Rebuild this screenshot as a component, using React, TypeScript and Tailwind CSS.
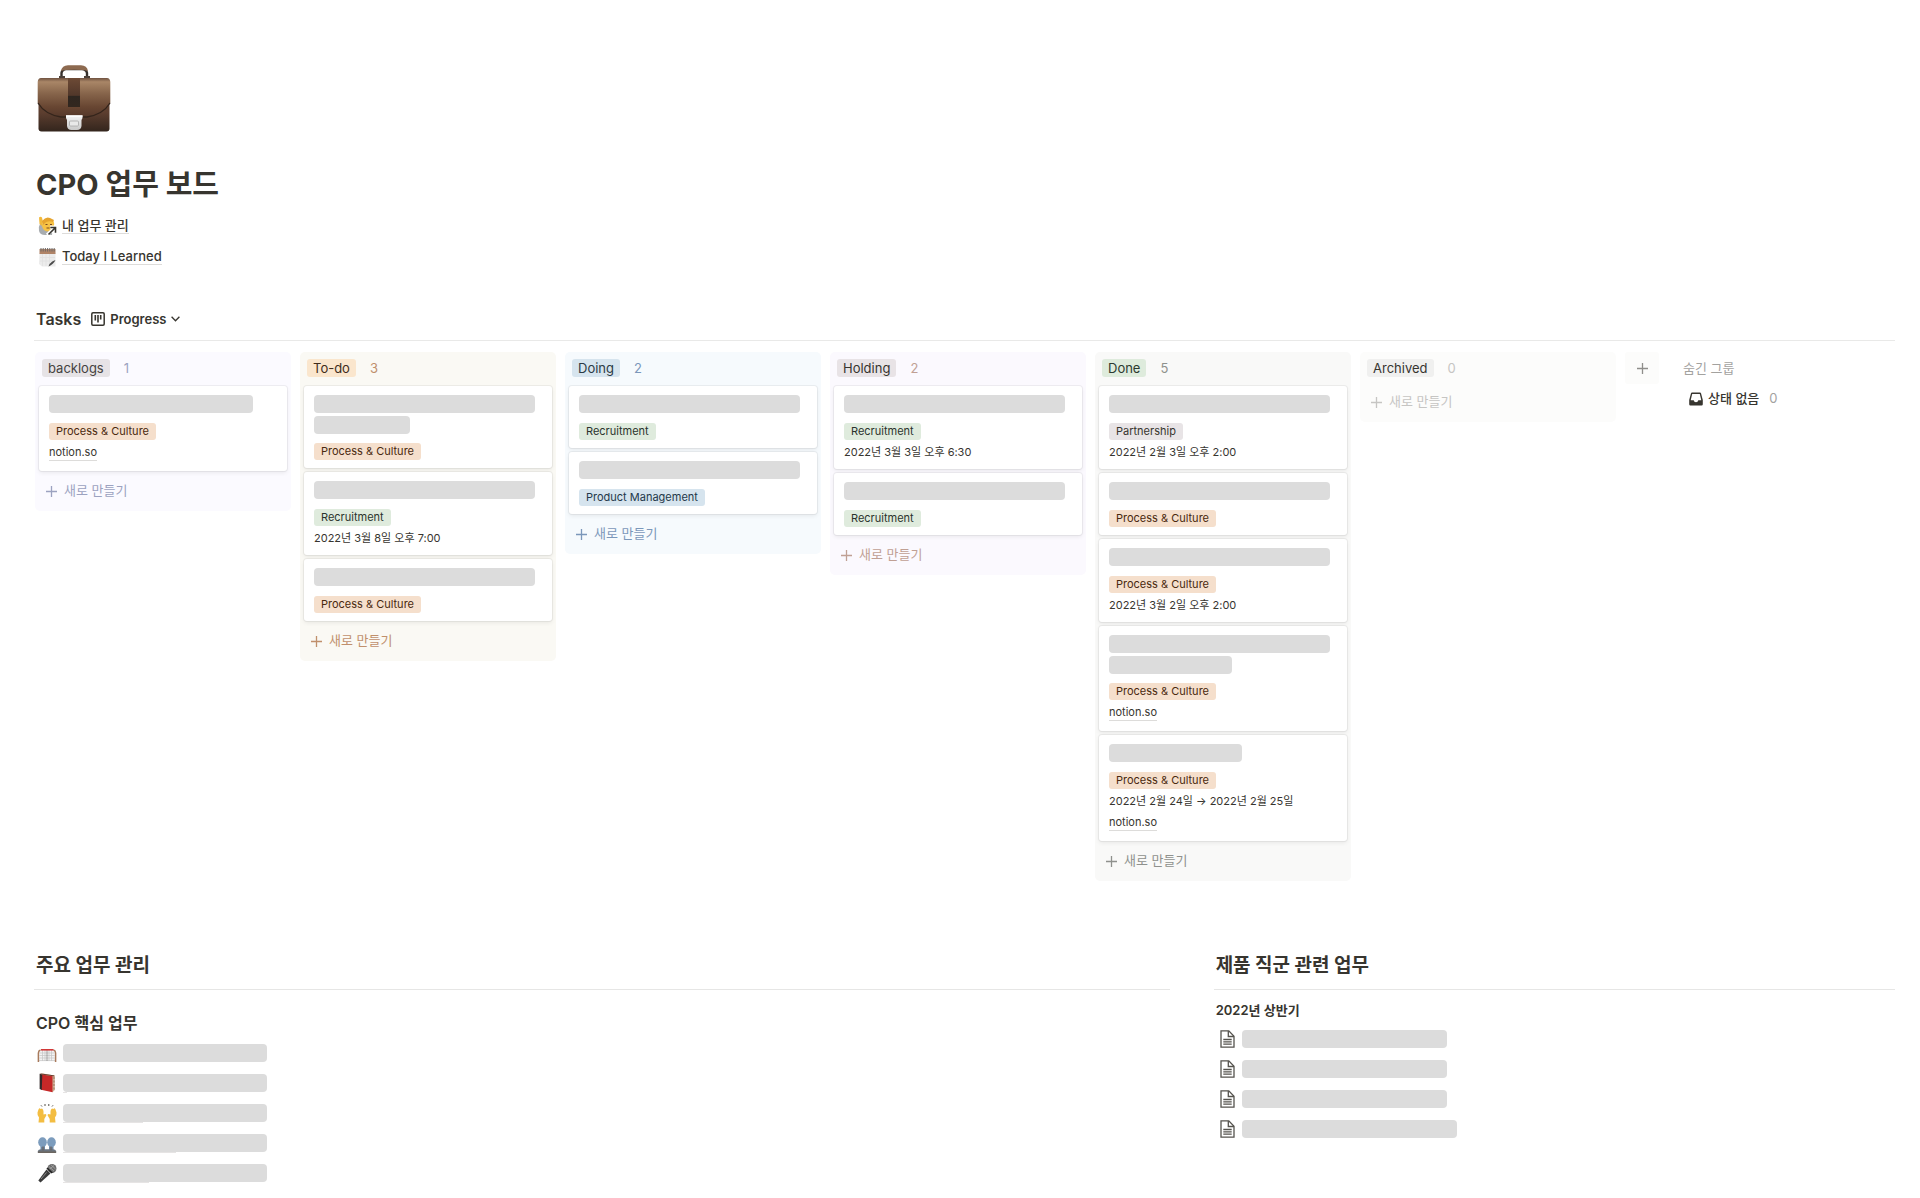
import React from "react";

type Tone = "orange" | "green" | "blue" | "gray";

type CardData = {
  bars: string[];
  tag: string;
  tone: Tone;
  date?: string;
  link?: string;
};

type ColumnData = {
  name: string;
  count: number;
  bg: string;
  pill: string;
  accent: string;
  cards: CardData[];
};

const TONES: Record<Tone, string> = {
  orange: "bg-[#f5dfcc] text-[#49290e]",
  green: "bg-[#dfebdd] text-[#2b332d]",
  blue: "bg-[#d6e4ee] text-[#24384a]",
  gray: "bg-[#e8e4e6] text-[#37352f]",
};

const PC = "Process & Culture";

const COLUMNS: ColumnData[] = [
  {
    name: "backlogs",
    count: 1,
    bg: "bg-[#fbfaff]",
    pill: "bg-[#e6e3e6] text-[#45423f]",
    accent: "text-[#9ca2c0]",
    cards: [{ bars: ["w-[204px]"], tag: PC, tone: "orange", link: "notion.so" }],
  },
  {
    name: "To-do",
    count: 3,
    bg: "bg-[#faf9f4]",
    pill: "bg-[#fae6cd] text-[#402c1b]",
    accent: "text-[#c0906c]",
    cards: [
      { bars: ["w-[221px]", "w-[96px]"], tag: PC, tone: "orange" },
      { bars: ["w-[221px]"], tag: "Recruitment", tone: "green", date: "2022년 3월 8일 오후 7:00" },
      { bars: ["w-[221px]"], tag: PC, tone: "orange" },
    ],
  },
  {
    name: "Doing",
    count: 2,
    bg: "bg-[#f6fafd]",
    pill: "bg-[#d6e4ee] text-[#2b3a45]",
    accent: "text-[#7b97ba]",
    cards: [
      { bars: ["w-[221px]"], tag: "Recruitment", tone: "green" },
      { bars: ["w-[221px]"], tag: "Product Management", tone: "blue" },
    ],
  },
  {
    name: "Holding",
    count: 2,
    bg: "bg-[#fbf9fe]",
    pill: "bg-[#e8e3e6] text-[#37352f]",
    accent: "text-[#c0a094]",
    cards: [
      { bars: ["w-[221px]"], tag: "Recruitment", tone: "green", date: "2022년 3월 3일 오후 6:30" },
      { bars: ["w-[221px]"], tag: "Recruitment", tone: "green" },
    ],
  },
  {
    name: "Done",
    count: 5,
    bg: "bg-[#f9f9f8]",
    pill: "bg-[#deebdc] text-[#2c3a30]",
    accent: "text-[#8f918d]",
    cards: [
      { bars: ["w-[221px]"], tag: "Partnership", tone: "gray", date: "2022년 2월 3일 오후 2:00" },
      { bars: ["w-[221px]"], tag: PC, tone: "orange" },
      { bars: ["w-[221px]"], tag: PC, tone: "orange", date: "2022년 3월 2일 오후 2:00" },
      { bars: ["w-[221px]", "w-[123px]"], tag: PC, tone: "orange", link: "notion.so" },
      {
        bars: ["w-[133px]"],
        tag: PC,
        tone: "orange",
        date: "2022년 2월 24일 → 2022년 2월 25일",
        link: "notion.so",
      },
    ],
  },
  {
    name: "Archived",
    count: 0,
    bg: "bg-[#fcfcfb]",
    pill: "bg-[#f0f0ef] text-[#37352f]",
    accent: "text-[#c6c5c3]",
    cards: [],
  },
];

function Plus() {
  return (
    <svg className="size-[11px] shrink-0" viewBox="0 0 11 11" fill="none" stroke="currentColor" strokeWidth="1.3">
      <path d="M5.5 0v11M0 5.5h11" />
    </svg>
  );
}

function Briefcase() {
  return (
    <svg className="ml-[3px] h-[67px] w-[74px]" viewBox="0 0 74 67" role="img" aria-label="briefcase">
      <defs>
        <linearGradient id="bc-body" x1="0" y1="0" x2="0" y2="1">
          <stop offset="0" stopColor="#6b4a35" />
          <stop offset="0.6" stopColor="#5c3e2f" />
          <stop offset="1" stopColor="#33251d" />
        </linearGradient>
        <linearGradient id="bc-flap" x1="0" y1="0" x2="0" y2="1">
          <stop offset="0" stopColor="#6f5240" />
          <stop offset="0.1" stopColor="#a98667" />
          <stop offset="0.4" stopColor="#87654b" />
          <stop offset="0.75" stopColor="#684632" />
          <stop offset="1" stopColor="#55382a" />
        </linearGradient>
        <linearGradient id="bc-strap" x1="0" y1="0" x2="0" y2="1">
          <stop offset="0" stopColor="#6d4a35" />
          <stop offset="0.6" stopColor="#51372a" />
          <stop offset="0.62" stopColor="#2e2620" />
          <stop offset="1" stopColor="#33271f" />
        </linearGradient>
        <linearGradient id="bc-lock" x1="0" y1="0" x2="0" y2="1">
          <stop offset="0" stopColor="#f4f4f4" />
          <stop offset="1" stopColor="#c9c9c9" />
        </linearGradient>
      </defs>
      <path d="M24.5 13V8Q25 4.500 29 4H45Q49.500 4.500 50 8V13" fill="none" stroke="#35302c" strokeWidth="2.400" />
      <path d="M24 6Q25 .5 31 .3H44Q50 .5 51 6Q47 4.800 37 4.800T24 6Z" fill="#8d6a50" />
      <path d="M22 11h6v3h-6zM47 11h6v3h-6z" fill="#4b4039" />
      <rect x="1.500" y="20" width="71" height="46.500" rx="3" fill="url(#bc-body)" />
      <path d="M4 13H70Q73 13 73.300 17V38Q66 49 50 51.500H24Q8 49 .7 38V17Q1 13 4 13Z" fill="url(#bc-flap)" />
      <path d="M1 38Q8 49.500 24 52H50Q66 49.500 73 38" fill="none" stroke="#33241b" strokeWidth="1.300" />
      <rect x="31" y="13" width="12" height="29" fill="url(#bc-strap)" />
      <path d="M29 50.500H45.500V53L44.500 55V61Q44 65 40 65H34.500Q30.500 65 30 61V55L29 53Z" fill="url(#bc-lock)" />
      <rect x="32.500" y="56" width="9" height="5" rx="1" fill="#e9e9e9" stroke="#a8a8a8" strokeWidth=".8" />
      <path d="M29 51H45.500" stroke="#fff" strokeWidth="1.500" />
    </svg>
  );
}

function RaisedHandIcon() {
  return (
    <svg className="h-5 w-[19px] shrink-0" viewBox="0 0 19 20">
      <path d="M2 8Q0 11 1 15Q2 19 7 19H14Q15 15 11 13L5 8Z" fill="#a9adb0" />
      <path d="M1 1.500Q2.500 0 4 1.500L5 6L4 10L1.500 8Z" fill="#f2b93c" />
      <path d="M5 5Q8 1.500 13 3Q17 5 16 10Q15 15 10 15.500Q5 15 4 10Z" fill="#f7c244" />
      <path d="M4 5Q8 0 12 2L16 4L15 6Q10 4 7 7L5 9Z" fill="#e6a42e" />
      <path d="M7.500 8.500h2M12 8.500h2M8.500 12h3" stroke="#7a4a20" strokeWidth="1" />
      <path d="M9 19L16.500 12M12 11.200H17.700V17" fill="none" stroke="#fff" strokeWidth="3.200" />
      <path d="M10.500 18.500L17 12M12.300 11.500H17.500V16.700" fill="none" stroke="#37352f" strokeWidth="1.600" />
    </svg>
  );
}

function NotepadIcon() {
  return (
    <svg className="h-5 w-[19px] shrink-0" viewBox="0 0 19 20">
      <path d="M1.500 6H17.500V19.500H4L1 17Z" fill="#ececec" />
      <path d="M4.500 7v12M8 7v12M11.500 7v12M2 10.500h15M2 14h15" stroke="#e0e0e0" strokeWidth=".7" />
      <rect x="1.500" y="2" width="16" height="5" fill="#b08468" />
      <path d="M3 1v3.500M5.200 1v3.500M7.400 1v3.500M9.600 1v3.500M11.800 1v3.500M14 1v3.500M16.200 1v3.500" stroke="#6e6a68" strokeWidth="1" />
      <path d="M17.500 13Q15.500 17 10.500 19.500L11.500 17Q14 14 17.500 13Z" fill="#4b4b4b" />
    </svg>
  );
}

function GoalIcon() {
  return (
    <svg className="h-5 w-5 shrink-0" viewBox="0 0 20 20">
      <path d="M3 7H17L18 18H2Z" fill="#f3f3f3" />
      <path d="M5.500 7v11M8 7v11M12 7v11M14.500 7v11M2.500 10h15M2.500 12.500h15M2.500 15h15M2 17.600h16" stroke="#c4c4c4" strokeWidth=".7" />
      <path d="M10 7v11" stroke="#8a8a8a" strokeWidth=".8" />
      <path d="M1.400 19V10Q1.500 7.500 3.500 7M18.600 19V10Q18.500 7.500 16.500 7" fill="none" stroke="#a87a5c" strokeWidth="1.500" />
      <path d="M4 6.800H16.500" stroke="#cf2e2e" strokeWidth="1.500" />
    </svg>
  );
}

function BookIcon() {
  return (
    <svg className="h-5 w-5 shrink-0" viewBox="0 0 20 20">
      <path d="M3 1L6 .5L17.800 2.500V17L15.500 19.300Z" fill="#cdb096" />
      <path d="M5 1.500L15.500 3.300V19.300L4 16.800Z" fill="#c62828" />
      <path d="M2.600 .8L5.300 1.500L4.800 17L2.600 16Z" fill="#33282a" />
      <path d="M3.500 .9L17.300 2.900" stroke="#6b3b2d" strokeWidth="1" />
      <path d="M17 4v13" stroke="#8a5a44" strokeWidth=".7" strokeDasharray="2 1.500" />
    </svg>
  );
}

function HandsIcon() {
  return (
    <svg className="h-5 w-5 shrink-0" viewBox="0 0 20 20">
      <path d="M4 2.300l1 1.200M8 1v2M11.800 1v2M16 2.300l-1 1.200" stroke="#55504a" strokeWidth="1" />
      <path d="M1.500 19.500L2 14.500Q0 12 .5 9.500L1.500 6.500Q2.500 4.500 3.500 6L5 5.500Q6.500 6.500 6.500 8.500V11.500L8.500 11Q9.900 11.500 9.300 12.500L7.300 16V19.500Z" fill="#f3bd42" />
      <path d="M18.500 19.500L18 14.500Q20 12 19.500 9.500L18.500 6.500Q17.500 4.500 16.500 6L15 5.500Q13.500 6.500 13.500 8.500V11.500L11.500 11Q10.100 11.500 10.700 12.500L12.700 16V19.500Z" fill="#f3bd42" />
    </svg>
  );
}

function PeopleIcon() {
  return (
    <svg className="h-5 w-5 shrink-0" viewBox="0 0 20 20">
      <path d="M3.500 12h4.500v5h-4.500zM12 12h4.500v5h-4.500z" fill="#6c86a2" />
      <path d="M.8 20V18Q1.500 16.300 4 16.300H16Q18.500 16.300 19.200 18V20Z" fill="#69737f" />
      <ellipse cx="5.500" cy="9.300" rx="4.300" ry="5" fill="#7c9cbd" />
      <ellipse cx="14.500" cy="9.300" rx="4.300" ry="5" fill="#7c9cbd" />
      <path d="M6 13.500v4M14 13.500v4" stroke="#6b625c" strokeWidth="1.200" />
      <path d="M1 19.200h18" stroke="#6d665f" strokeWidth="1.500" />
    </svg>
  );
}

function MicIcon() {
  return (
    <svg className="h-5 w-5 shrink-0" viewBox="0 0 20 20">
      <path d="M9.500 6.500L13.500 10.500L3.500 19.500L1.300 17.500Z" fill="#3b3b3b" />
      <path d="M9.500 9.500L4 16" stroke="#8a8a8a" strokeWidth="1" />
      <circle cx="15" cy="5.500" r="4.500" fill="#6c6c6c" />
      <path d="M12 3.500L17 8M14 1.800L18.500 6M17 2.500L11.500 7" stroke="#a7a7a7" strokeWidth=".8" />
      <path d="M10 5L15.200 10" stroke="#1f1f1f" strokeWidth="1.600" />
    </svg>
  );
}

function PageIcon() {
  return (
    <svg className="h-[18px] w-[15px] shrink-0" viewBox="0 0 15 18" fill="none" stroke="#55534e" strokeWidth="1.300">
      <path d="M1 .8H8.800L14 6.200V17.200H1Z" />
      <path d="M8.300 1V6.500H14" />
      <path d="M3.300 9.500H11.700M3.300 11.800H11.700M3.300 14.100H11.700" />
    </svg>
  );
}

function BoardIcon() {
  return (
    <svg className="size-[14px]" viewBox="0 0 14 14" fill="none" stroke="currentColor">
      <rect x=".8" y=".8" width="12.400" height="12.400" rx="1.200" strokeWidth="1.500" />
      <path d="M4.300 3v5.500M7 3v7.500M9.700 3v4.500" strokeWidth="1.600" />
    </svg>
  );
}

function TrayIcon() {
  return (
    <svg className="size-[14px]" viewBox="0 0 14 14">
      <path
        fillRule="evenodd"
        fill="#37352f"
        d="M3 .5H11Q11.800 .5 12 1.200L13.800 8V12.300Q13.800 13.500 12.600 13.500H1.400Q.2 13.500 .2 12.300V8L2 1.200Q2.200 .5 3 .5ZM3.200 2L1.700 8.200H4.700Q5 10.200 7 10.200T9.300 8.200H12.300L10.800 2Z"
      />
    </svg>
  );
}

function Card({ card }: { card: CardData }) {
  const two = card.bars.length > 1;
  return (
    <article className="rounded-[3px] bg-white px-[10px] pt-[9px] pb-2 shadow-[0_0_0_1px_rgba(15,15,15,0.05),0_2px_4px_rgba(15,15,15,0.07)]">
      <div className="flex flex-col gap-[3px]">
        {card.bars.map((w, i) => (
          <div key={i} className={`h-[18px] max-w-full rounded-[4px] bg-[#dcdcdc] ${w}`} />
        ))}
      </div>
      <div
        className={`flex flex-col items-start gap-1 text-[11px] leading-[17px] whitespace-nowrap ${
          two ? "mt-[9px]" : "mt-[10px]"
        }`}
      >
        <span className={`rounded-[3px] px-[7px] ${TONES[card.tone]}`}>{card.tag}</span>
        {card.date && <span>{card.date}</span>}
        {card.link && (
          <span className="pb-[2px]">
            <a href="#notion" className="block h-[17px] border-b border-[#dddcda]">
              {card.link}
            </a>
          </span>
        )}
      </div>
    </article>
  );
}

function Column({ column }: { column: ColumnData }) {
  return (
    <section className={`w-[256px] shrink-0 rounded-[5px] px-1 pb-1 ${column.bg}`}>
      <header className="mb-[2px] flex h-8 items-center gap-[14px] pl-[3px]">
        <h3 className={`rounded-[3px] px-[6px] text-[13px] leading-[18px] ${column.pill}`}>{column.name}</h3>
        <span className={`text-[13px] leading-[18px] ${column.accent}`}>{column.count}</span>
      </header>
      <div className="flex flex-col gap-1">
        {column.cards.map((card, i) => (
          <Card key={i} card={card} />
        ))}
        <button type="button" className={`flex h-8 w-full items-center gap-[7px] pl-[7px] text-[13px] ${column.accent}`}>
          <Plus />
          새로 만들기
        </button>
      </div>
    </section>
  );
}

function SectionTitle({ children }: { children: React.ReactNode }) {
  return (
    <h2 className="h-[49px] border-b border-[#e6e6e5] pl-[2px] text-[19px] leading-[50px] font-bold">{children}</h2>
  );
}

const CORE = [
  { name: "goal", icon: <GoalIcon />, line: "w-0" },
  { name: "book", icon: <BookIcon />, line: "w-1" },
  { name: "hands", icon: <HandsIcon />, line: "w-[80px]" },
  { name: "people", icon: <PeopleIcon />, line: "w-[113px]" },
  { name: "microphone", icon: <MicIcon />, line: "w-[86px]" },
];

const PAGES = ["w-[205px]", "w-[205px]", "w-[205px]", "w-[215px]"];

export default function App() {
  return (
    <main className="min-h-screen bg-white pt-[65px] pr-[25px] pb-4 pl-[34px] font-['Inter','Noto_Sans_CJK_KR',sans-serif] text-[#37352f]">
      <Briefcase />
      <h1 className="mt-[33px] pl-[2px] text-[29px] leading-[40px] font-bold">CPO 업무 보드</h1>

      <nav className="mt-[5px] pl-1 text-[13px] font-medium">
        <a href="#my-work" className="flex h-[31px] items-center gap-[5px]">
          <RaisedHandIcon />
          <span className="h-[17px] border-b border-[#dddcda] leading-[16px]">내 업무 관리</span>
        </a>
        <a href="#til" className="flex h-[31px] items-center gap-[5px]">
          <NotepadIcon />
          <span className="h-[17px] border-b border-[#dddcda] leading-[16px]">Today I Learned</span>
        </a>
      </nav>

      <header className="mt-[25px] flex h-11 items-center gap-[10px] border-b border-[#e9e9e8] pl-[2px]">
        <h2 className="text-[16px] leading-6 font-semibold">Tasks</h2>
        <button type="button" className="flex items-center gap-[5px] text-[13px] leading-5 font-semibold">
          <BoardIcon />
          Progress
          <svg className="h-[6px] w-[9px]" viewBox="0 0 9 6" fill="none" stroke="currentColor" strokeWidth="1.300">
            <path d="M.6 .8L4.500 4.800L8.400 .8" />
          </svg>
        </button>
      </header>

      <div className="mt-[11px] flex items-start gap-[9px] pl-px">
        {COLUMNS.map((c) => (
          <Column key={c.name} column={c} />
        ))}
        <button
          type="button"
          aria-label="Add group"
          className="flex h-8 w-[34px] shrink-0 items-center justify-center rounded-[3px] bg-[#fcfcfb] text-[#8f8e8b]"
        >
          <Plus />
        </button>
        <section className="ml-[15px] whitespace-nowrap">
          <h3 className="text-[13px] leading-8 text-[#a3a29f]">숨긴 그룹</h3>
          <button type="button" className="ml-[6px] flex h-[29px] items-center gap-[5px] text-[13px] font-medium">
            <TrayIcon />
            상태 없음
            <span className="ml-[5px] text-[13px] font-normal text-[#a3a29f]">0</span>
          </button>
        </section>
      </div>

      <div className="mt-[60px] grid grid-cols-[5fr_3fr] gap-11">
        <section>
          <SectionTitle>주요 업무 관리</SectionTitle>
          <h3 className="mt-[21px] pl-[2px] text-[16px] leading-6 font-semibold">CPO 핵심 업무</h3>
          <ul className="mt-[3px] pl-[3px]">
            {CORE.map((item) => (
              <li key={item.name}>
                <a href={`#${item.name}`} aria-label={item.name} className="flex h-[30px] items-center gap-[6px]">
                  {item.icon}
                  <span className="mt-px">
                    <span className="block h-[18px] w-[204px] rounded-[4px] bg-[#dcdcdc]" />
                    <span className={`block h-px bg-[#e6e4e4] ${item.line}`} />
                  </span>
                </a>
              </li>
            ))}
          </ul>
        </section>
        <section>
          <SectionTitle>제품 직군 관련 업무</SectionTitle>
          <h3 className="mt-[10px] pl-[2px] text-[13px] leading-5 font-semibold">2022년 상반기</h3>
          <ul className="mt-1 pl-[6px]">
            {PAGES.map((w, i) => (
              <li key={i}>
                <a href={`#page-${i + 1}`} aria-label={`page ${i + 1}`} className="flex h-[30px] items-center gap-[7px]">
                  <PageIcon />
                  <span className={`block h-[18px] rounded-[4px] bg-[#dcdcdc] ${w}`} />
                </a>
              </li>
            ))}
          </ul>
        </section>
      </div>
    </main>
  );
}
